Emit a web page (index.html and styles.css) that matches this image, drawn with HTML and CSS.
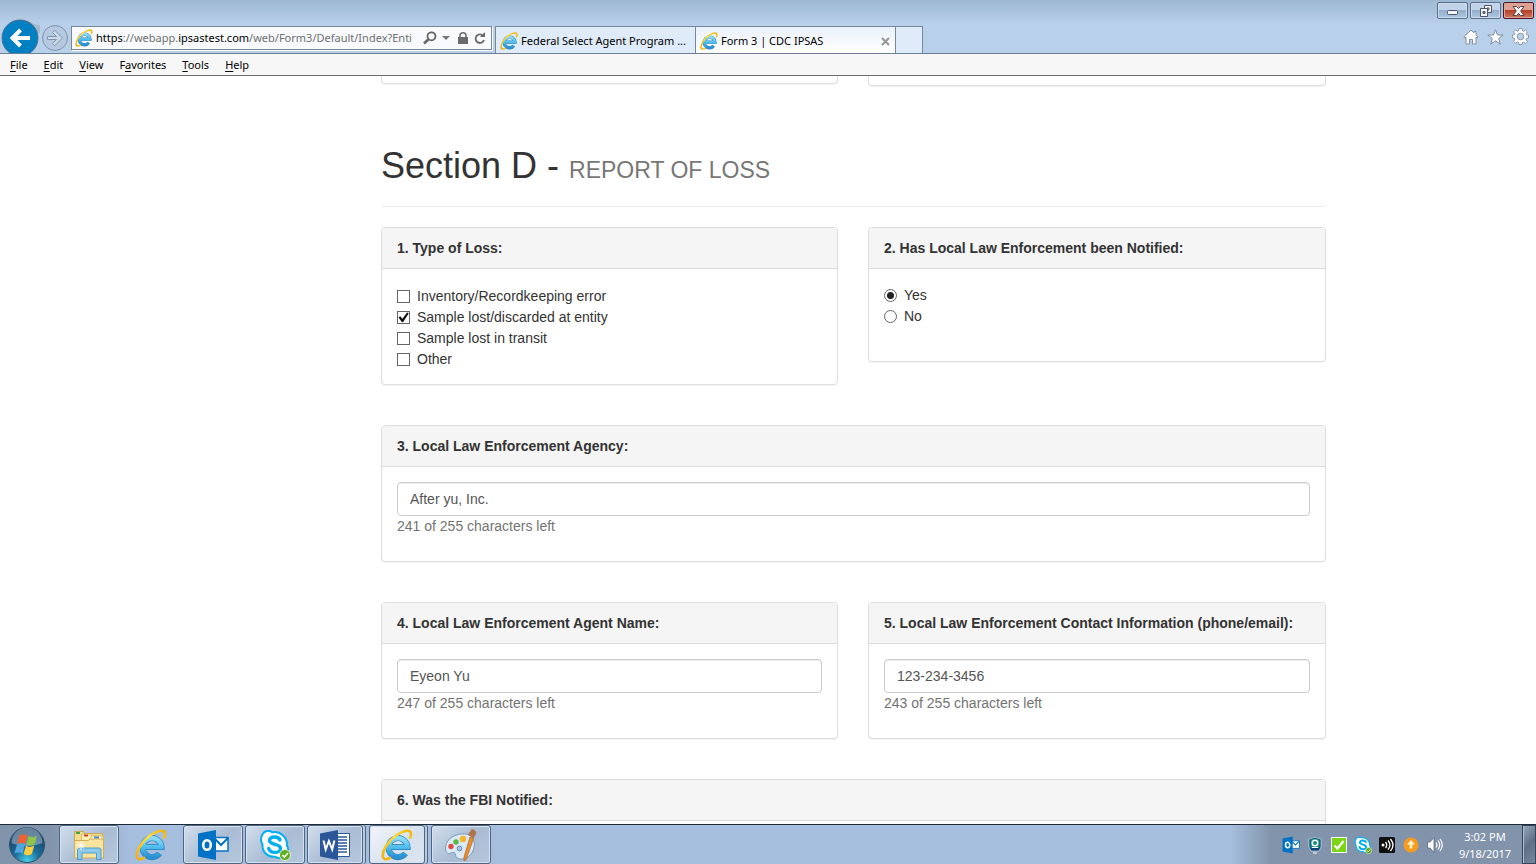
FILE: index.html
```html
<!DOCTYPE html>
<html lang="en">
<head>
<meta charset="utf-8">
<title>Form 3 | CDC IPSAS</title>
<link rel="stylesheet" href="styles.css">
</head>
<body>
<svg class="defs" width="0" height="0" aria-hidden="true">
  <defs>
    <linearGradient id="ieBlue" x1="0" y1="0" x2="0" y2="1"><stop offset="0" stop-color="#8fdcf8"/><stop offset=".5" stop-color="#4dbcec"/><stop offset="1" stop-color="#2b8fd0"/></linearGradient>
    <linearGradient id="ieGold" x1="0" y1="1" x2="1" y2="0"><stop offset="0" stop-color="#eeb010"/><stop offset=".6" stop-color="#ffdc3c"/><stop offset="1" stop-color="#f2b40f"/></linearGradient>
    <symbol id="ie" viewBox="0 0 32 32">
      <path fill="none" stroke="#2a7fba" stroke-width="6" d="M9 18H26.500A9.500 9.500 0 1 0 24.500 24.500"/>
      <path fill="none" stroke="url(#ieBlue)" stroke-width="4.600" d="M9 18H26.500A9.500 9.500 0 1 0 24.500 24.500"/>
      <path fill="none" stroke="url(#ieGold)" stroke-width="2.700" stroke-linecap="round" d="M9 29C5 31 2.500 30.500 2 28 1 22 7 12 15 6.500 22 1.800 28 .5 29.500 3c.8 1.800.5 3.500-.2 5.500"/>
    </symbol>
    <symbol id="outlook" viewBox="0 0 32 32">
      <path fill="#fff" stroke="#0072c6" stroke-width="1.500" d="M17 8.500h14v13.500H17z"/><path fill="none" stroke="#0072c6" stroke-width="2" d="M17 9l7 7 7-7"/>
      <path fill="#0072c6" d="M1 4.500L19 1v30L1 27.500z"/><ellipse cx="10" cy="16" rx="3.800" ry="4.800" fill="none" stroke="#fff" stroke-width="2.600"/>
    </symbol>
    <symbol id="skype" viewBox="0 0 32 32">
      <path fill="#fff" stroke="#00aff0" stroke-width="2" d="M9 2c2 0 3.300.5 4.500 1.300C21 2 28.500 8 28 16.500c3 5.500-1 12.500-7.500 12.500-1.500 0-3-.4-4.300-1.200C9 28.500 3 23 3.500 15.500 0 10 3.500 2 9 2z"/>
      <path fill="none" stroke="#00aff0" stroke-width="3.400" stroke-linecap="round" d="M21 11c-1-2.500-3-3-5.500-3-3 0-5 1.300-5 3.600 0 5 11 2.400 11 7.800 0 2.600-2.500 4-5.500 4-3.500 0-5.500-1.500-6.300-4"/>
      <circle cx="26" cy="26" r="5.500" fill="#5fae1c" stroke="#fff" stroke-width=".8"/><path fill="none" stroke="#fff" stroke-width="1.700" d="M23.300 26l2 2 3.700-4"/>
    </symbol>
  </defs>
</svg>

<header class="browser">
  <div class="history">
    <button class="plain" aria-label="Back"><svg width="40" height="34" viewBox="0 19 40 34"><path fill="#a5b9d0" d="M28 20c5 4 8 5 12 5v8H30z"/><circle cx="20" cy="38" r="18" fill="#0080c3" stroke="#4d6f8d"/><path fill="none" stroke="#fff" stroke-width="4" d="M30 38H13M20.500 30l-8 8 8 8"/></svg></button>
    <button class="plain" aria-label="Forward"><svg width="28" height="34" viewBox="41 19 28 34"><circle cx="55" cy="38" r="12.500" fill="#b5c9e0" stroke="#8093aa"/><path fill="#cbdaeb" stroke="#8295ab" d="M47.500 36.500h9l-4-4 2.200-2.300 7.800 7.800-7.800 7.800-2.200-2.300 4-4h-9z"/></svg></button>
  </div>
  <div class="address">
    <svg width="18" height="18"><use href="#ie"/></svg>
    <div class="url" role="textbox" aria-label="Address" contenteditable="true" spellcheck="false"><b>https</b>://webapp.<b>ipsastest.com</b>/web/Form3/Default/Index?Enti</div>
    <button class="plain" aria-label="Search"><svg width="14" height="14" viewBox="0 0 14 14"><circle cx="8.500" cy="5.300" r="4" fill="none" stroke="#666" stroke-width="1.800"/><path stroke="#666" stroke-width="2.600" d="M5.500 8.300L1 12.500"/></svg></button>
    <button class="plain" aria-label="Show address list"><svg width="8" height="5"><path fill="#777" d="M0 0h8L4 4z"/></svg></button>
    <svg class="lock" width="10" height="12" viewBox="0 0 10 12"><path fill="#6b6b6b" d="M0 5h10v7H0z"/><path fill="none" stroke="#6b6b6b" stroke-width="1.600" d="M2 6V3.500a3 2.700 0 0 1 6 0V6"/></svg>
    <button class="plain" aria-label="Refresh"><svg width="12" height="13" viewBox="0 0 12 13"><path fill="none" stroke="#6b6b6b" stroke-width="1.900" d="M9.300 4A4.300 4.300 0 1 0 10 8"/><path fill="#6b6b6b" d="M6 5h5V0z"/></svg></button>
  </div>
  <nav class="tabs" aria-label="Tabs">
    <button class="tab"><svg width="18" height="18"><use href="#ie"/></svg><span>Federal Select Agent Program ...</span></button>
    <div class="tab active"><svg width="18" height="18"><use href="#ie"/></svg><span>Form 3 | CDC IPSAS</span><button class="plain close" aria-label="Close tab"><svg width="9" height="9" viewBox="0 0 9 9"><path stroke="#9a9a9a" stroke-width="2.200" d="M1 1l7 7M8 1L1 8"/></svg></button></div>
    <button class="tab new" aria-label="New tab"></button>
  </nav>
  <div class="corner">
    <div class="window-controls">
      <button aria-label="Minimize"><svg class="minimize" width="12" height="6"><rect x=".5" y=".5" width="10" height="4" rx="1" fill="#f4f4f4" stroke="#4c566a"/></svg></button>
      <button aria-label="Restore"><svg width="12" height="12" viewBox="0 0 12 12"><path fill="#f4f4f4" fill-rule="evenodd" stroke="#4c566a" d="M4.500.5h7v7h-7zM7 3v2h2V3z"/><path fill="#f4f4f4" fill-rule="evenodd" stroke="#4c566a" d="M.5 3.500h7v8h-7zM3 6.500v2h2v-2z"/></svg></button>
      <button class="exit" aria-label="Close"><svg width="13" height="10" viewBox="0 0 13 10"><path fill="#f6f6f6" stroke="#54424d" d="M1 .5h3.500l2 2 2-2H12L8.700 5 12 9.500H8.500l-2-2-2 2H1L4.300 5z"/></svg></button>
    </div>
    <div class="tools">
      <button class="plain" aria-label="Home"><svg width="16" height="16" viewBox="0 0 16 16"><path fill="#fff" stroke="#8091a6" d="M8 1L.8 8l1 1L3 8.200V15h3.500v-4.500h3V15H13V8.200l1.200.8 1-1L13 5.800V2.500h-2v1.400z"/></svg></button>
      <button class="plain" aria-label="Favorites"><svg width="17" height="16" viewBox="0 0 17 16"><path fill="#fff" stroke="#8091a6" d="M8.500.8l2 5.200h5.700l-4.500 3.500 1.600 5.600-4.800-3.300-4.800 3.300 1.600-5.600L.8 6h5.700z"/></svg></button>
      <button class="plain" aria-label="Settings"><svg width="17" height="17" viewBox="-8.500 -8.500 17 17"><path fill="#fff" fill-rule="evenodd" stroke="#8091a6" stroke-width=".9" d="M-1.500-8h3l.4 2.300 1.200.5 2-1.300L7-4.600 5.600-2.900l.4 1.200 2 .3v2.800l-2 .4-.5 1.200 1.300 1.900-2 2-1.800-1.300-1.100.5L1.500 8h-3l-.4-2-1.200-.5-1.800 1.300-2-2 1.300-1.900-.5-1.200-2-.4v-2.800l2-.3.500-1.200L-7-4.600l2-2 2 1.300 1.100-.5zM0-3.300a3.300 3.300 0 1 0 0 6.600 3.300 3.300 0 1 0 0-6.600z"/></svg></button>
    </div>
  </div>
</header>
<nav class="menubar" aria-label="Menu">
  <button class="plain"><u>F</u>ile</button><button class="plain"><u>E</u>dit</button><button class="plain"><u>V</u>iew</button><button class="plain">F<u>a</u>vorites</button><button class="plain"><u>T</u>ools</button><button class="plain"><u>H</u>elp</button>
</nav>

<main class="page">
  <form class="form">
    <div class="row previous">
      <div class="panel-end"></div>
      <div class="panel-end tall"></div>
    </div>
    <h1>Section D - <small>REPORT OF LOSS</small></h1>
    <div class="row">
      <section class="panel">
        <h2 id="q1">1. Type of Loss:</h2>
        <div class="choices checks" role="group" aria-labelledby="q1">
          <label><input type="checkbox"> Inventory/Recordkeeping error</label>
          <label><input type="checkbox" checked> Sample lost/discarded at entity</label>
          <label><input type="checkbox"> Sample lost in transit</label>
          <label><input type="checkbox"> Other</label>
        </div>
      </section>
      <section class="panel">
        <h2 id="q2">2. Has Local Law Enforcement been Notified:</h2>
        <div class="choices radios" role="radiogroup" aria-labelledby="q2">
          <label><input type="radio" name="notified" checked> Yes</label>
          <label><input type="radio" name="notified"> No</label>
        </div>
      </section>
    </div>
    <section class="panel">
      <h2><label for="agency">3. Local Law Enforcement Agency:</label></h2>
      <div class="field"><input type="text" id="agency" value="After yu, Inc."><p>241 of 255 characters left</p></div>
    </section>
    <div class="row">
      <section class="panel">
        <h2><label for="agent">4. Local Law Enforcement Agent Name:</label></h2>
        <div class="field"><input type="text" id="agent" value="Eyeon Yu"><p>247 of 255 characters left</p></div>
      </section>
      <section class="panel">
        <h2><label for="contact">5. Local Law Enforcement Contact Information (phone/email):</label></h2>
        <div class="field"><input type="text" id="contact" value="123-234-3456"><p>243 of 255 characters left</p></div>
      </section>
    </div>
    <section class="panel">
      <h2>6. Was the FBI Notified:</h2>
      <div class="field"></div>
    </section>
  </form>
</main>

<footer class="taskbar">
  <button class="start" aria-label="Start"><svg width="38" height="38" viewBox="0 0 38 38">
    <defs><radialGradient id="orb" cx=".5" cy=".95" r=".8"><stop offset="0" stop-color="#45d0e8"/><stop offset=".45" stop-color="#1b6f9c"/><stop offset="1" stop-color="#1d4265"/></radialGradient></defs>
    <circle cx="19" cy="19" r="17.500" fill="url(#orb)" stroke="#34506f"/><path fill="#c3d5e4" opacity=".45" d="M3.500 17a15.500 15.500 0 0 1 31 0c-9 4-22 4-31 0z"/>
    <path fill="#ee6130" d="M11.500 9.500c3-1.800 5.500-1.500 8 0l-2.300 8.300c-2.500-1.500-5-1.500-8 0z"/><path fill="#8fc646" d="M20.700 10c2.600 1.500 5 1.500 8.200 0l-2.300 8.300c-3 1.700-5.500 1.500-8.200 0z"/>
    <path fill="#51a5e0" d="M8.800 19.200c3-1.700 5.500-1.500 8 0l-2.300 8.300c-2.500-1.500-5-1.500-8 0z"/><path fill="#fbce3e" d="M18 19.800c2.600 1.500 5 1.500 8.200 0l-2.300 8.300c-3 1.700-5.500 1.500-8.200 0z"/>
  </svg></button>
  <div class="apps">
    <button class="app open" aria-label="File Explorer"><svg width="34" height="34" viewBox="0 0 34 34"><path fill="#f3dc8c" stroke="#c9a650" d="M2.500 3.500h9l1 2h18v24h-28z"/><path fill="#3fa442" d="M4 4h4v2H4z"/><path fill="#fbeeb4" stroke="#d5b765" stroke-width=".8" d="M9.500 6h9l1 2h12v20h-22z"/><path fill="#d34430" d="M12 6.500h4v2h-4z"/><path fill="#fff3c4" stroke="#d5b765" stroke-width=".8" d="M19 8h10l2 3v17H19z"/><path fill="#3989d3" d="M22 8.500h5v2h-5z"/><path fill="#f8e49e" stroke="#d0ae5a" d="M2.500 12.500H16l2-1.500h13.500v19h-29z"/><path fill="#8ccbeb" stroke="#4c9cc9" d="M5.500 31.500V22q0-2 2-2H27q2 0 2 2v9.500h-4.500V25H10v6.500z"/><path stroke="#fff" d="M9 13v9M4.500 17.500h9M6 14.500l6 6M12 14.500l-6 6"/></svg></button>
    <button class="app" aria-label="Internet Explorer"><svg width="32" height="32"><use href="#ie"/></svg></button>
    <button class="app open" aria-label="Outlook"><svg width="32" height="32"><use href="#outlook"/></svg></button>
    <button class="app open" aria-label="Skype"><svg width="32" height="32"><use href="#skype"/></svg></button>
    <button class="app open stacked" aria-label="Word"><svg width="32" height="32" viewBox="0 0 32 32"><path fill="#fff" stroke="#2b579a" d="M16 4.500h14.500v23H16z"/><path stroke="#2b579a" stroke-width="1.400" d="M19 8h9M19 11h9M19 14h9M19 17h9M19 20h9M19 23h9"/><path fill="#2b579a" d="M1 4.500L19 1v30L1 27.500z"/><path fill="none" stroke="#fff" stroke-width="2" d="M4.500 11.500l2.200 9 3.200-8.500 3.300 8.500 2.200-9"/></svg></button>
    <button class="app open stacked current" aria-label="Form 3"><svg width="32" height="32"><use href="#ie"/></svg></button>
    <button class="app open" aria-label="Paint"><svg width="34" height="34" viewBox="0 0 34 34"><path fill="#d9e9f5" stroke="#7c9bb8" d="M17 6C8 7 1 13 1.500 21c.3 4 3 5.500 5.500 4 2.500-1.200 4.500-.5 4.500 2 .5 5 8 5.200 13 1.500 6-4.500 7.500-13 4-18.500C26 6.500 22 5.500 17 6z"/><circle cx="7" cy="18.500" r="2.700" fill="#e44a3c"/><circle cx="12" cy="14" r="2.700" fill="#58b840"/><circle cx="19" cy="11" r="3.200" fill="#f4b52a"/><circle cx="15.500" cy="20.500" r="2.400" fill="#a7c4df" stroke="#668cb0"/><path fill="#e58e32" stroke="#b9651d" stroke-width=".7" d="M26 9l3.500 1.500L22 32l-2 1v-4z"/><path fill="#b0744d" d="M24 6.500c1.500-3 3-3.500 3.500-5.500 1 1.500 1.500.5 2.500 0 .5 2 2.500 2 2 4.500-.3 2-2 3-2.500 5z"/></svg></button>
  </div>
  <div class="tray">
    <svg width="18" height="18" viewBox="0 0 32 32"><use href="#outlook"/></svg>
    <svg width="18" height="18" viewBox="0 0 18 18"><path fill="#0b4278" stroke="#eef5fa" stroke-width=".6" d="M3 3q6-3 12 0v8l-2 4H5l-2-4z"/><rect x="4.500" y="3" width="9" height="9" rx="1" fill="#12907f"/><circle cx="9" cy="7" r="2.800" fill="none" stroke="#fff" stroke-width="1.500"/><path stroke="#fff" d="M6 11.500h6M7 17h4"/></svg>
    <svg width="18" height="18" viewBox="0 0 18 18"><path fill="#7bd414" stroke="#fff" d="M1.500 1.500h15v15h-15z"/><path fill="none" stroke="#fff" stroke-width="2.200" d="M4.500 9.500l3 3 6-7.500"/></svg>
    <svg width="18" height="18" viewBox="0 0 32 32"><use href="#skype"/></svg>
    <svg width="18" height="18" viewBox="0 0 18 18"><rect x="1" y="1" width="16" height="16" rx="1.500" fill="#101010"/><circle cx="5" cy="9" r="1.500" fill="#fff"/><path fill="none" stroke="#fff" stroke-width="1.300" d="M7.500 6q2.500 3 0 6M10 4.500q4 4.500 0 9M12.500 3q5 6 0 12"/></svg>
    <svg width="18" height="18" viewBox="0 0 18 18"><circle cx="9" cy="9" r="7.500" fill="#f79a1d"/><path fill="#fff6cf" d="M9 4l4 4.500h-2.700v4H7.700v-4H5z"/></svg>
    <svg width="18" height="18" viewBox="0 0 18 18"><path fill="#fff" stroke="#55657a" stroke-width=".8" d="M1.500 6H4l4-4.500v15L4 12H1.500z"/><path fill="none" stroke="#fff" stroke-width="1.200" d="M10 6.500q2 2.500 0 5M12 4.500q3.500 4.500 0 9M14 3q4.500 6 0 12"/></svg>
  </div>
  <div class="clock"><span>3:02 PM</span><span>9/18/2017</span></div>
  <button class="show-desktop" aria-label="Show desktop"></button>
</footer>
</body>
</html>
```

FILE: styles.css
```css
* { box-sizing: border-box; }
html, body { height: 100%; }
body {
  margin: 0;
  display: flex;
  flex-direction: column;
  overflow: hidden;
  background: #fff;
  color: #333;
  font: 14px/20px "Liberation Sans", Arial, sans-serif;
}
.defs { position: absolute; }
svg { display: block; flex: none; }
button { font: inherit; color: inherit; margin: 0; padding: 0; }
.plain { border: 0; background: none; display: block; }

/* Browser frame */
.browser {
  flex: none;
  display: flex;
  align-items: flex-end;
  height: 54px;
  border-bottom: 1px solid #6d7f94;
  background: linear-gradient(#9db7d2, #b9d0ea 24px);
  color: #000;
  font: 11px/16px "Noto Sans", "Open Sans", sans-serif;
}
.history { display: flex; gap: 1px; flex: 0 0 71px; }
.address {
  flex: 0 1 421px;
  min-width: 0;
  display: flex;
  align-items: center;
  height: 24px;
  margin: 0 3px 3px 0;
  padding: 0 5px 0 3px;
  border: 1px solid #77889b;
  background: #f8fafe;
  box-shadow: 1px 1px #fff;
}
.url { flex: 1; min-width: 0; margin: 0 4px 0 3px; overflow: hidden; white-space: nowrap; color: #707070; outline: 0; }
.url b { font-weight: 400; color: #000; }
.address button + button { margin-left: 5px; }
.lock { margin: 0 6px 0 8px; }
.tabs { display: flex; flex: 0 1 428px; min-width: 0; height: 27px; border-left: 1px solid #77889b; }
.tab {
  flex: 0 1 200px;
  min-width: 0;
  display: flex;
  align-items: center;
  gap: 3px;
  padding: 2px 5px 0 4px;
  border: 0;
  border-top: 1px solid #77889b;
  border-right: 1px solid #77889b;
  background: #dfebf8;
  white-space: nowrap;
  text-align: left;
}
.tab.active { background: linear-gradient(#eaf1fa, #fff); }
.tab.new { flex-basis: 27px; }
.close { margin-left: auto; }
.corner { margin-left: auto; align-self: stretch; display: flex; flex-direction: column; justify-content: space-between; align-items: flex-end; padding: 2px 2px 8px 0; }
.window-controls { display: flex; gap: 2px; }
.window-controls button {
  display: grid;
  place-items: center;
  width: 31px;
  height: 17px;
  border: 1px solid #5c708b;
  border-radius: 2px;
  background: linear-gradient(#c1d3e8 45%, #94aecb 50%, #afc7e1);
  box-shadow: inset 0 0 0 1px #c9dbed;
}
.window-controls .minimize { margin-top: 4px; }
.window-controls .exit { border-color: #4c1722; background: linear-gradient(#dfa093 45%, #b83d22 50%, #cf7963); box-shadow: inset 0 0 0 1px #dfa498; }
.tools { display: flex; align-items: center; gap: 8px; padding-right: 5px; }
.menubar {
  flex: none;
  display: flex;
  gap: 16px;
  height: 22px;
  padding: 0 10px;
  border-bottom: 1px solid #6c6c70;
  background: #f7f7f7;
  color: #000;
  font: 11px/20px "Noto Sans", "Open Sans", sans-serif;
}
.menubar u { text-underline-offset: 2px; }

/* Form page */
.page {
  flex: 1;
  min-height: 0;
  overflow: hidden;
  display: grid;
  grid-template-columns: minmax(16px, 381fr) minmax(0, 945fr) minmax(16px, 210fr);
}
.form { grid-column: 2; }
.row { display: grid; grid-template-columns: 457fr 458fr; gap: 30px; align-items: start; }
.form > .row, .form > .panel { margin-bottom: 40px; }
.form > .previous { margin-bottom: 60px; }
.panel-end { height: 8px; border: 1px solid #ddd; border-top: 0; border-radius: 0 0 4px 4px; box-shadow: 0 1px 1px rgba(0, 0, 0, .05); }
.panel-end.tall { height: 10px; }
h1 { margin: 0 0 20px; padding-bottom: 20px; border-bottom: 1px solid #eee; font-size: 36px; line-height: 40px; font-weight: 400; }
h1 small { font-size: 23px; line-height: 24px; color: #777; }
.panel { min-width: 0; border: 1px solid #ddd; border-radius: 4px; background: #fff; box-shadow: 0 1px 1px rgba(0, 0, 0, .05); }
.panel h2 { margin: 0; padding: 10px 15px; border-bottom: 1px solid #ddd; border-radius: 3px 3px 0 0; background: #f5f5f5; font-size: 14px; line-height: 20px; font-weight: 700; }
.choices label { display: flex; align-items: flex-start; gap: 7px; height: 21px; }
.choices input { appearance: none; display: grid; place-items: center; width: 13px; height: 13px; margin: 4px 0 0; border: 1px solid #666; background: #fff; }
.checks { padding: 17px 15px 14px; }
.checks input:checked::before { content: ""; width: 11px; height: 11px; background: #111; clip-path: polygon(5% 50%, 20% 38%, 40% 62%, 82% 5%, 98% 12%, 46% 94%, 34% 92%); }
.radios { min-height: 92px; padding: 16px 15px; }
.radios input { border-radius: 50%; }
.radios input:checked::before { content: ""; width: 7px; height: 7px; border-radius: 50%; background: #222; }
.field { padding: 15px; }
.field input {
  display: block;
  width: 100%;
  height: 34px;
  padding: 6px 12px;
  border: 1px solid #ccc;
  border-radius: 4px;
  color: #555;
  font: inherit;
  box-shadow: inset 0 1px 1px rgba(0, 0, 0, .075);
}
.field p { margin: 0 0 10px; color: #737373; }

/* Taskbar */
.taskbar {
  flex: none;
  display: flex;
  align-items: stretch;
  height: 40px;
  border-top: 1px solid #1f2a38;
  background: linear-gradient(90deg, #8294ab 50px, #a5bedd 130px, #a5bedd calc(100% - 305px), #8294ab calc(100% - 265px));
}
.start { width: 59px; padding-left: 8px; border: 0; background: none; }
.apps { display: flex; gap: 2px; }
.app { display: grid; place-items: center; width: 60px; border: 1px solid transparent; border-radius: 3px; background: none; }
.app.open { border-color: #4f6681; background: linear-gradient(135deg, #d2deec, #a9bcd4 55%, #b6c8dd); box-shadow: inset 0 0 0 1px #d6e2ef; }
.app.stacked { width: 56px; margin-right: 4px; box-shadow: inset 0 0 0 1px #d6e2ef, 2px 0 #b9cbe0, 3px 0 #4f6681; }
.app.current { background: linear-gradient(135deg, #f3f6fa, #d5e0ed 60%, #dde7f1); }
.tray { display: flex; align-items: center; gap: 6px; margin-left: auto; }
.clock { display: flex; flex-direction: column; align-items: center; width: 78px; padding: 3px 0 0 4px; color: #fff; font: 11px/17px "Noto Sans", "Open Sans", sans-serif; }
.show-desktop { width: 14px; border: 1px solid #35455b; background: linear-gradient(135deg, #9aa9bc, #5d6e86 50%, #75869c); box-shadow: inset 1px 0 #aebccd; }
```
